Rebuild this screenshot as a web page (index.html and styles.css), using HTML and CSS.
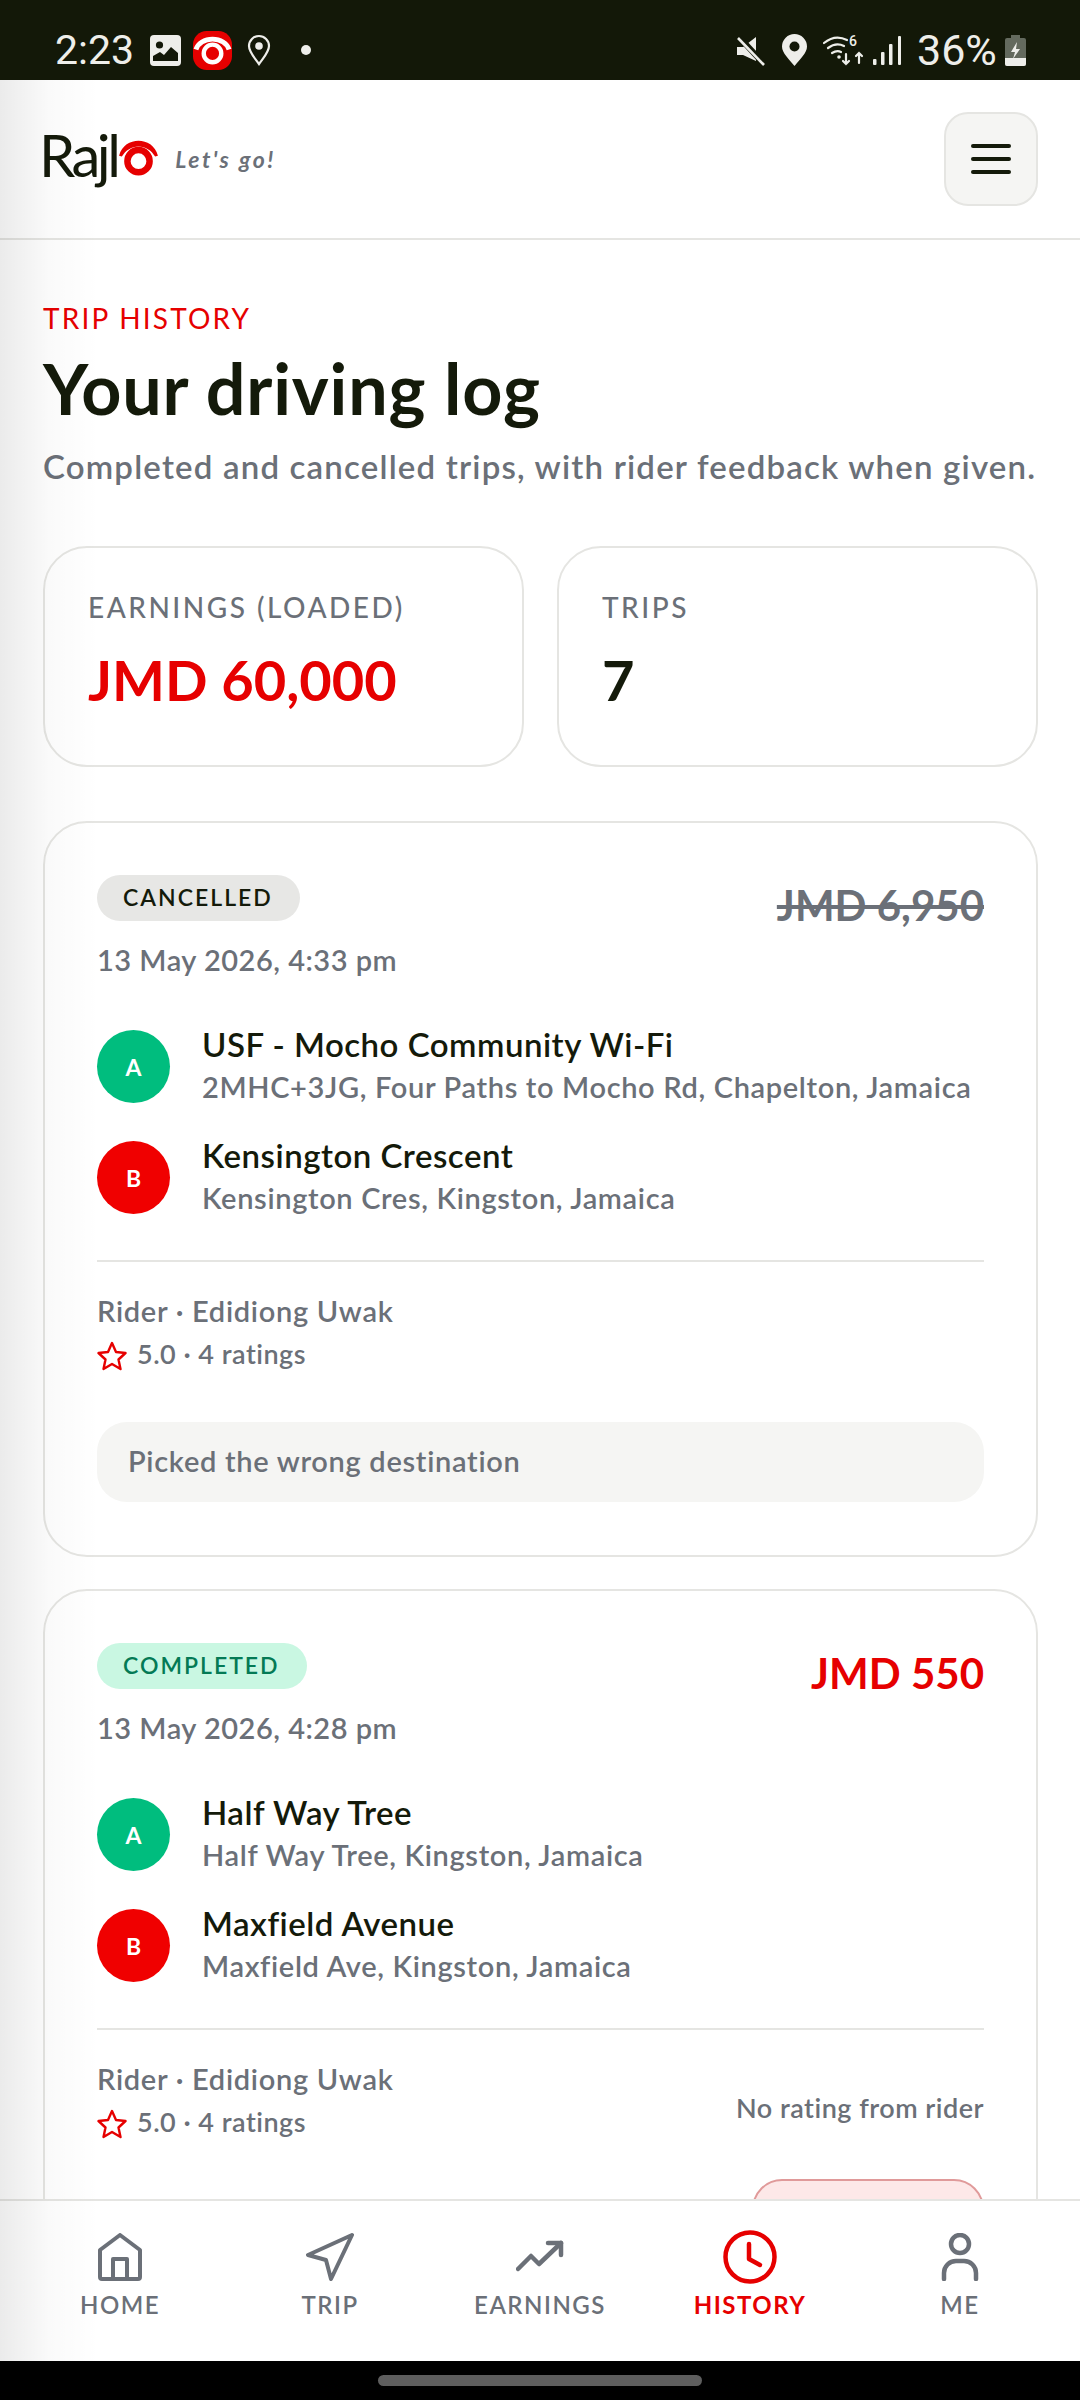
FILE: index.html
```html
<!DOCTYPE html>
<html lang="en">
<head>
  <meta charset="UTF-8" />
  <meta name="viewport" content="width=device-width, initial-scale=1.0"/>
  <title>Trip History</title>
  <link rel="stylesheet" href="styles.css">
</head>
<body>
<div class="phone">

  <!-- status bar -->
  <div class="statusbar">
    <div class="status-left">
      <span class="clock">2:23</span>
      <svg class="si-image" viewBox="0 0 31 31"><rect width="31" height="31" rx="4" fill="#eeeeea"/><circle cx="9.5" cy="10" r="3.6" fill="#131808"/><path d="M3 26v-5l7-4 4 3 7-8 7 6v8z" fill="#131808"/></svg>
      <svg class="si-app" viewBox="0 0 40 40"><rect width="40" height="40" rx="14" fill="#e60000"/><circle cx="20" cy="23" r="9" fill="#e60000" stroke="#fff" stroke-width="4.5"/><path d="M3 19a17.500 14 0 0 1 34 0" fill="none" stroke="#fff" stroke-width="5"/></svg>
      <svg class="si-pin" viewBox="0 0 24 32"><path d="M12 30C7 23 2 18 2 12a10 10 0 0 1 20 0c0 6-5 11-10 18z" fill="none" stroke="#eeeeea" stroke-width="2.200"/><circle cx="12" cy="12" r="3.800" fill="#eeeeea"/></svg>
      <span class="si-dot"></span>
    </div>
    <div class="status-right">
      <svg class="si-mute" viewBox="0 0 30 31"><path d="M1 12h6l13-10v24L7 20H1z" fill="#eeeeea"/><path d="M3 2l25 27" stroke="#131808" stroke-width="6"/><path d="M2 3l26 27" stroke="#eeeeea" stroke-width="2.600"/></svg>
      <svg class="si-fillpin" viewBox="0 0 25 32"><path d="M12.500 32C7 25 0 19 0 12.500a12.500 12.500 0 0 1 25 0C25 19 18 25 12.500 32z" fill="#eeeeea"/><circle cx="12.500" cy="12.500" r="5" fill="#131808"/></svg>
      <svg class="si-wifi" viewBox="0 0 41 32"><g fill="none" stroke="#eeeeea" stroke-width="2.200" stroke-linecap="round"><path d="M1 9q11-9 23-3"/><path d="M5 14q8-6 16-2"/><path d="M9 19q5-3 9-1"/><path d="M23 20v10M20 27l3 3 3-3"/><path d="M36 29v-10M33 22l3-3 3 3"/></g><circle cx="16" cy="23" r="1.800" fill="#eeeeea"/><text x="26" y="12" class="si-six">6</text></svg>
      <svg class="si-signal" viewBox="0 0 28 31"><g fill="#eeeeea"><rect x="0" y="24" width="3.500" height="6" rx="1"/><rect x="8" y="17" width="3.500" height="13" rx="1"/><rect x="16" y="9" width="3.500" height="21" rx="1"/><rect x="25" y="1" width="3" height="29" rx="1"/></g></svg>
      <span class="percent">36%</span>
      <svg class="si-batt" viewBox="0 0 21 31"><path d="M6 0h9v3h4a2 2 0 0 1 2 2v24a2 2 0 0 1-2 2H2a2 2 0 0 1-2-2V5a2 2 0 0 1 2-2h4z" fill="#646a5e"/><path d="M0 23h21v6a2 2 0 0 1-2 2H2a2 2 0 0 1-2-2z" fill="#eeeeea"/><path d="M12 7l-6 10h4l-2 7 7-10h-4z" fill="#eeeeea"/></svg>
    </div>
  </div>

  <!-- app header -->
  <header class="topbar">
    <div class="brand">
      <span class="brand-name">Rajl</span>
      <svg class="brand-mark" viewBox="0 0 44 40"><circle cx="22" cy="24" r="12" fill="none" stroke="#e60000" stroke-width="7"/><path d="M1 18C4 7 13 2 22 2s18 5 21 16l-3 1C36 12 29 8 22 8S8 12 4 19z" fill="#e60000"/></svg>
      <span class="tagline">Let's go!</span>
    </div>
    <button class="menu-btn"><span></span><span></span><span></span></button>
  </header>

  <main class="content">
    <p class="eyebrow">TRIP HISTORY</p>
    <h1>Your driving log</h1>
    <p class="lead">Completed and cancelled trips, with rider feedback when given.</p>

    <div class="stats">
      <div class="stat">
        <div class="stat-label">EARNINGS (LOADED)</div>
        <div class="stat-value red">JMD 60,000</div>
      </div>
      <div class="stat">
        <div class="stat-label">TRIPS</div>
        <div class="stat-value">7</div>
      </div>
    </div>

    <!-- cancelled trip -->
    <section class="trip">
      <div class="trip-head">
        <div>
          <span class="badge badge-cancelled">CANCELLED</span>
          <div class="trip-date">13 May 2026, 4:33 pm</div>
        </div>
        <div class="price price-void">JMD 6,950</div>
      </div>
      <div class="stops">
        <div class="stop">
          <span class="pin pin-a">A</span>
          <div>
            <div class="stop-name">USF - Mocho Community Wi-Fi</div>
            <div class="stop-addr">2MHC+3JG, Four Paths to Mocho Rd, Chapelton, Jamaica</div>
          </div>
        </div>
        <div class="stop">
          <span class="pin pin-b">B</span>
          <div>
            <div class="stop-name">Kensington Crescent</div>
            <div class="stop-addr">Kensington Cres, Kingston, Jamaica</div>
          </div>
        </div>
      </div>
      <div class="rider-row">
        <div>
          <div class="rider">Rider · Edidiong Uwak</div>
          <div class="rating">
            <svg class="star" viewBox="0 0 30 30"><path d="M15 2l4 9 9.500 1-7 6.500 2 9.500-8.500-5-8.500 5 2-9.500-7-6.500 9.500-1z" fill="none" stroke="#e60000" stroke-width="2.400" stroke-linejoin="round"/></svg>
            5.0 · 4 ratings
          </div>
        </div>
      </div>
      <div class="note">Picked the wrong destination</div>
    </section>

    <!-- completed trip -->
    <section class="trip">
      <div class="trip-head">
        <div>
          <span class="badge badge-completed">COMPLETED</span>
          <div class="trip-date">13 May 2026, 4:28 pm</div>
        </div>
        <div class="price red">JMD 550</div>
      </div>
      <div class="stops">
        <div class="stop">
          <span class="pin pin-a">A</span>
          <div>
            <div class="stop-name">Half Way Tree</div>
            <div class="stop-addr">Half Way Tree, Kingston, Jamaica</div>
          </div>
        </div>
        <div class="stop">
          <span class="pin pin-b">B</span>
          <div>
            <div class="stop-name">Maxfield Avenue</div>
            <div class="stop-addr">Maxfield Ave, Kingston, Jamaica</div>
          </div>
        </div>
      </div>
      <div class="rider-row">
        <div>
          <div class="rider">Rider · Edidiong Uwak</div>
          <div class="rating">
            <svg class="star" viewBox="0 0 30 30"><path d="M15 2l4 9 9.500 1-7 6.500 2 9.500-8.500-5-8.500 5 2-9.500-7-6.500 9.500-1z" fill="none" stroke="#e60000" stroke-width="2.400" stroke-linejoin="round"/></svg>
            5.0 · 4 ratings
          </div>
        </div>
        <div class="no-rating">No rating from rider</div>
      </div>
      <div class="trip-actions">
        <div class="btn-rate">
          <svg class="star" viewBox="0 0 30 30"><path d="M15 2l4 9 9.500 1-7 6.500 2 9.500-8.500-5-8.500 5 2-9.500-7-6.500 9.500-1z" fill="#e60000"/></svg>
        </div>
      </div>
    </section>
  </main>

  <!-- bottom nav -->
  <nav class="tabs">
    <div class="tab">
      <svg viewBox="0 0 44 48" class="tab-icon"><g fill="none" stroke="#6b7078" stroke-width="4" stroke-linejoin="round"><path d="M22 2L2 17v27a2 2 0 0 0 2 2h36a2 2 0 0 0 2-2V17z"/><path d="M15 46V26h14v20"/></g></svg>
      <span>HOME</span>
    </div>
    <div class="tab">
      <svg viewBox="0 0 48 48" class="tab-icon"><path d="M46 2L2 22l18 5 5 19z" fill="none" stroke="#6b7078" stroke-width="4" stroke-linejoin="round"/></svg>
      <span>TRIP</span>
    </div>
    <div class="tab">
      <svg viewBox="0 0 48 48" class="tab-icon"><g fill="none" stroke="#6b7078" stroke-width="4.500" stroke-linecap="round" stroke-linejoin="round"><path d="M2 36l13-13 8 8 22-21"/><path d="M32 10h13v12"/></g></svg>
      <span>EARNINGS</span>
    </div>
    <div class="tab active">
      <svg viewBox="0 0 54 54" class="tab-icon clock-icon"><g fill="none" stroke="#e60000" stroke-width="4.500" stroke-linecap="round" stroke-linejoin="round"><circle cx="27" cy="27" r="24.500"/><path d="M26 14v15l11 6"/></g></svg>
      <span>HISTORY</span>
    </div>
    <div class="tab">
      <svg viewBox="0 0 48 48" class="tab-icon"><g fill="none" stroke="#6b7078" stroke-width="4.500" stroke-linecap="round"><circle cx="24" cy="11" r="9"/><path d="M8 46v-6a12 12 0 0 1 12-12h8a12 12 0 0 1 12 12v6"/></g></svg>
      <span>ME</span>
    </div>
  </nav>

  <div class="gesture-bar"><span></span></div>

  <div class="edge-shade"></div>
</div>
</body>
</html>
```

FILE: styles.css
```css
* { box-sizing: border-box; }
html, body { margin: 0; padding: 0; }
body { font-family: "Lato", "Noto Sans", sans-serif; color: #141a0a; background: #fff; }
p, h1 { margin: 0; }

.phone { position: relative; width: 1080px; height: 2400px; display: flex; flex-direction: column; overflow: hidden; background: #fff; }
.red { color: #e60000; }

/* status bar */
.statusbar { height: 80px; flex: none; background: #131808; display: flex; justify-content: space-between; align-items: center; padding: 20px 54px 0 55px; color: #eeeeea; font-family: "Roboto", sans-serif; }
.status-left, .status-right { display: flex; align-items: center; }
.clock { font-size: 41px; width: 95px; }
.percent { font-size: 43px; width: 88px; margin-left: 16px; }
.si-image { width: 31px; height: 31px; }
.si-app { width: 39px; height: 39px; margin-left: 12px; }
.si-pin { width: 24px; height: 32px; margin-left: 15px; }
.si-dot { width: 10px; height: 10px; border-radius: 50%; background: #eeeeea; margin-left: 30px; }
.si-mute { width: 30px; height: 31px; }
.si-fillpin { width: 25px; height: 32px; margin-left: 16px; }
.si-wifi { width: 41px; height: 32px; margin-left: 16px; }
.si-six { font-size: 14px; font-weight: 500; fill: #eeeeea; font-family: "Roboto", sans-serif; }
.si-signal { width: 28px; height: 31px; margin-left: 9px; }
.si-batt { width: 21px; height: 31px; }

/* header */
.topbar { height: 160px; flex: none; display: flex; justify-content: space-between; align-items: center; padding: 0 42px 0 39px; border-bottom: 2px solid #e5e5e2; }
.brand { display: flex; align-items: center; margin-top: -9px; }
.brand-name { font-size: 58px; letter-spacing: -3.5px; color: #141a0a; line-height: 1; }
.brand-mark { width: 41px; height: 37px; margin: 6px 0 0 1px; }
.tagline { font-size: 23px; font-style: italic; font-weight: 700; letter-spacing: 2.500px; color: #6b7078; margin: 8px 0 0 16px; }
.menu-btn { width: 94px; height: 94px; border: 2px solid #e5e5e2; border-radius: 24px; background: #f5f5f3; display: flex; flex-direction: column; justify-content: center; align-items: center; gap: 9px; padding: 0; }
.menu-btn span { display: block; width: 40px; height: 4px; border-radius: 2px; background: #141a0a; }

/* page */
.content { flex: 1; min-height: 0; overflow: hidden; padding: 61px 42px 0 43px; }
.eyebrow { font-size: 28px; line-height: 34px; letter-spacing: 2.200px; color: #e60000; }
h1 { font-size: 70px; line-height: 84px; font-weight: 700; letter-spacing: 0.800px; margin-top: 11px; }
.lead { font-size: 33px; line-height: 42px; font-weight: 600; letter-spacing: 1.180px; color: #6b7078; margin-top: 15px; }

.stats { display: grid; grid-template-columns: 1fr 1fr; gap: 33px; margin-top: 59px; }
.stat { height: 221px; border: 2px solid #e5e5e2; border-radius: 44px; padding: 41px 43px; }
.stat-label { font-size: 28px; line-height: 36px; letter-spacing: 2.500px; color: #6b7078; font-weight: 500; }
.stat-value { font-size: 56px; line-height: 70px; font-weight: 700; margin-top: 20px; }

/* trip cards */
.trip { border: 2px solid #e5e5e2; border-radius: 44px; padding: 52px 52px 53px; margin-top: 32px; }
.stats + .trip { margin-top: 54px; }
.trip-head { display: flex; justify-content: space-between; align-items: flex-start; }
.badge { display: inline-block; height: 46px; line-height: 44px; padding: 0 27px 0 26px; border-radius: 23px; font-size: 23px; font-weight: 600; letter-spacing: 2px; }
.badge-cancelled { background: #e7e7e5; color: #141a0a; }
.badge-completed { background: #c9f7e2; color: #047a55; }
.trip-date { font-size: 29px; line-height: 38px; font-weight: 600; letter-spacing: 0.500px; color: #6b7078; margin-top: 20px; }
.price { font-size: 42px; line-height: 50px; font-weight: 700; margin-top: 5px; }
.price-void { color: #6b7078; text-decoration: line-through; }

.stops { display: flex; flex-direction: column; gap: 28px; margin-top: 46px; }
.stop { display: flex; align-items: center; gap: 32px; }
.pin { flex: none; width: 73px; height: 73px; border-radius: 50%; display: flex; align-items: center; justify-content: center; color: #fff; font-size: 23px; font-weight: 700; }
.pin-a { background: #00bd7e; }
.pin-b { background: #f00000; }
.stop-name { font-size: 33px; line-height: 38px; font-weight: 600; letter-spacing: 0.500px; }
.stop-addr { font-size: 29px; line-height: 42px; font-weight: 600; letter-spacing: 0.650px; color: #6b7078; margin-top: 3px; }

.rider-row { display: flex; justify-content: space-between; align-items: center; border-top: 2px solid #e5e5e2; margin-top: 41px; padding-top: 30px; }
.rider { font-size: 29px; line-height: 38px; font-weight: 600; letter-spacing: 0.700px; color: #6b7078; }
.rating { display: flex; align-items: center; gap: 10px; font-size: 27px; line-height: 38px; font-weight: 600; letter-spacing: 0.500px; color: #6b7078; margin-top: 5px; }
.star { width: 30px; height: 30px; flex: none; margin-top: 4px; }
.no-rating { font-size: 27px; font-weight: 600; letter-spacing: 0.500px; color: #6b7078; margin-top: 14px; }

.note { background: #f5f5f3; border-radius: 30px; height: 80px; line-height: 77px; padding: 0 31px; margin-top: 49px; font-size: 29px; font-weight: 600; letter-spacing: 0.700px; color: #6b7078; }

.trip-actions { display: flex; justify-content: flex-end; margin-top: 38px; }
.btn-rate { width: 232px; height: 72px; display: flex; align-items: flex-start; padding: 15px 0 0 36px; background: #fde8e8; border: 2px solid #e09a9a; border-radius: 30px; }

/* bottom nav */
.tabs { height: 162px; flex: none; background: #fff; border-top: 2px solid #e5e5e2; display: grid; grid-template-columns: repeat(5, 210px); padding: 32px 15px 0; position: relative; }
.tab { display: flex; flex-direction: column; align-items: center; color: #6b7078; font-size: 24px; font-weight: 600; letter-spacing: 1.500px; }
.tab-icon { width: 48px; height: 48px; margin-bottom: 9px; flex: none; }
.clock-icon { width: 54px; height: 54px; margin-top: -3px; margin-bottom: 6px; }
.tab.active { color: #e60000; font-weight: 700; }

.gesture-bar { height: 39px; flex: none; background: #000; display: flex; justify-content: center; padding-top: 14px; }
.gesture-bar span { display: block; width: 324px; height: 11px; border-radius: 6px; background: #5e5e5e; }

/* gray shade running down the left side of the screenshot */
.edge-shade { position: absolute; left: 0; top: 80px; bottom: 39px; width: 100px; background: linear-gradient(to right, rgba(0,0,0,0.08), rgba(0,0,0,0.02) 50%, rgba(0,0,0,0)); pointer-events: none; }
```
